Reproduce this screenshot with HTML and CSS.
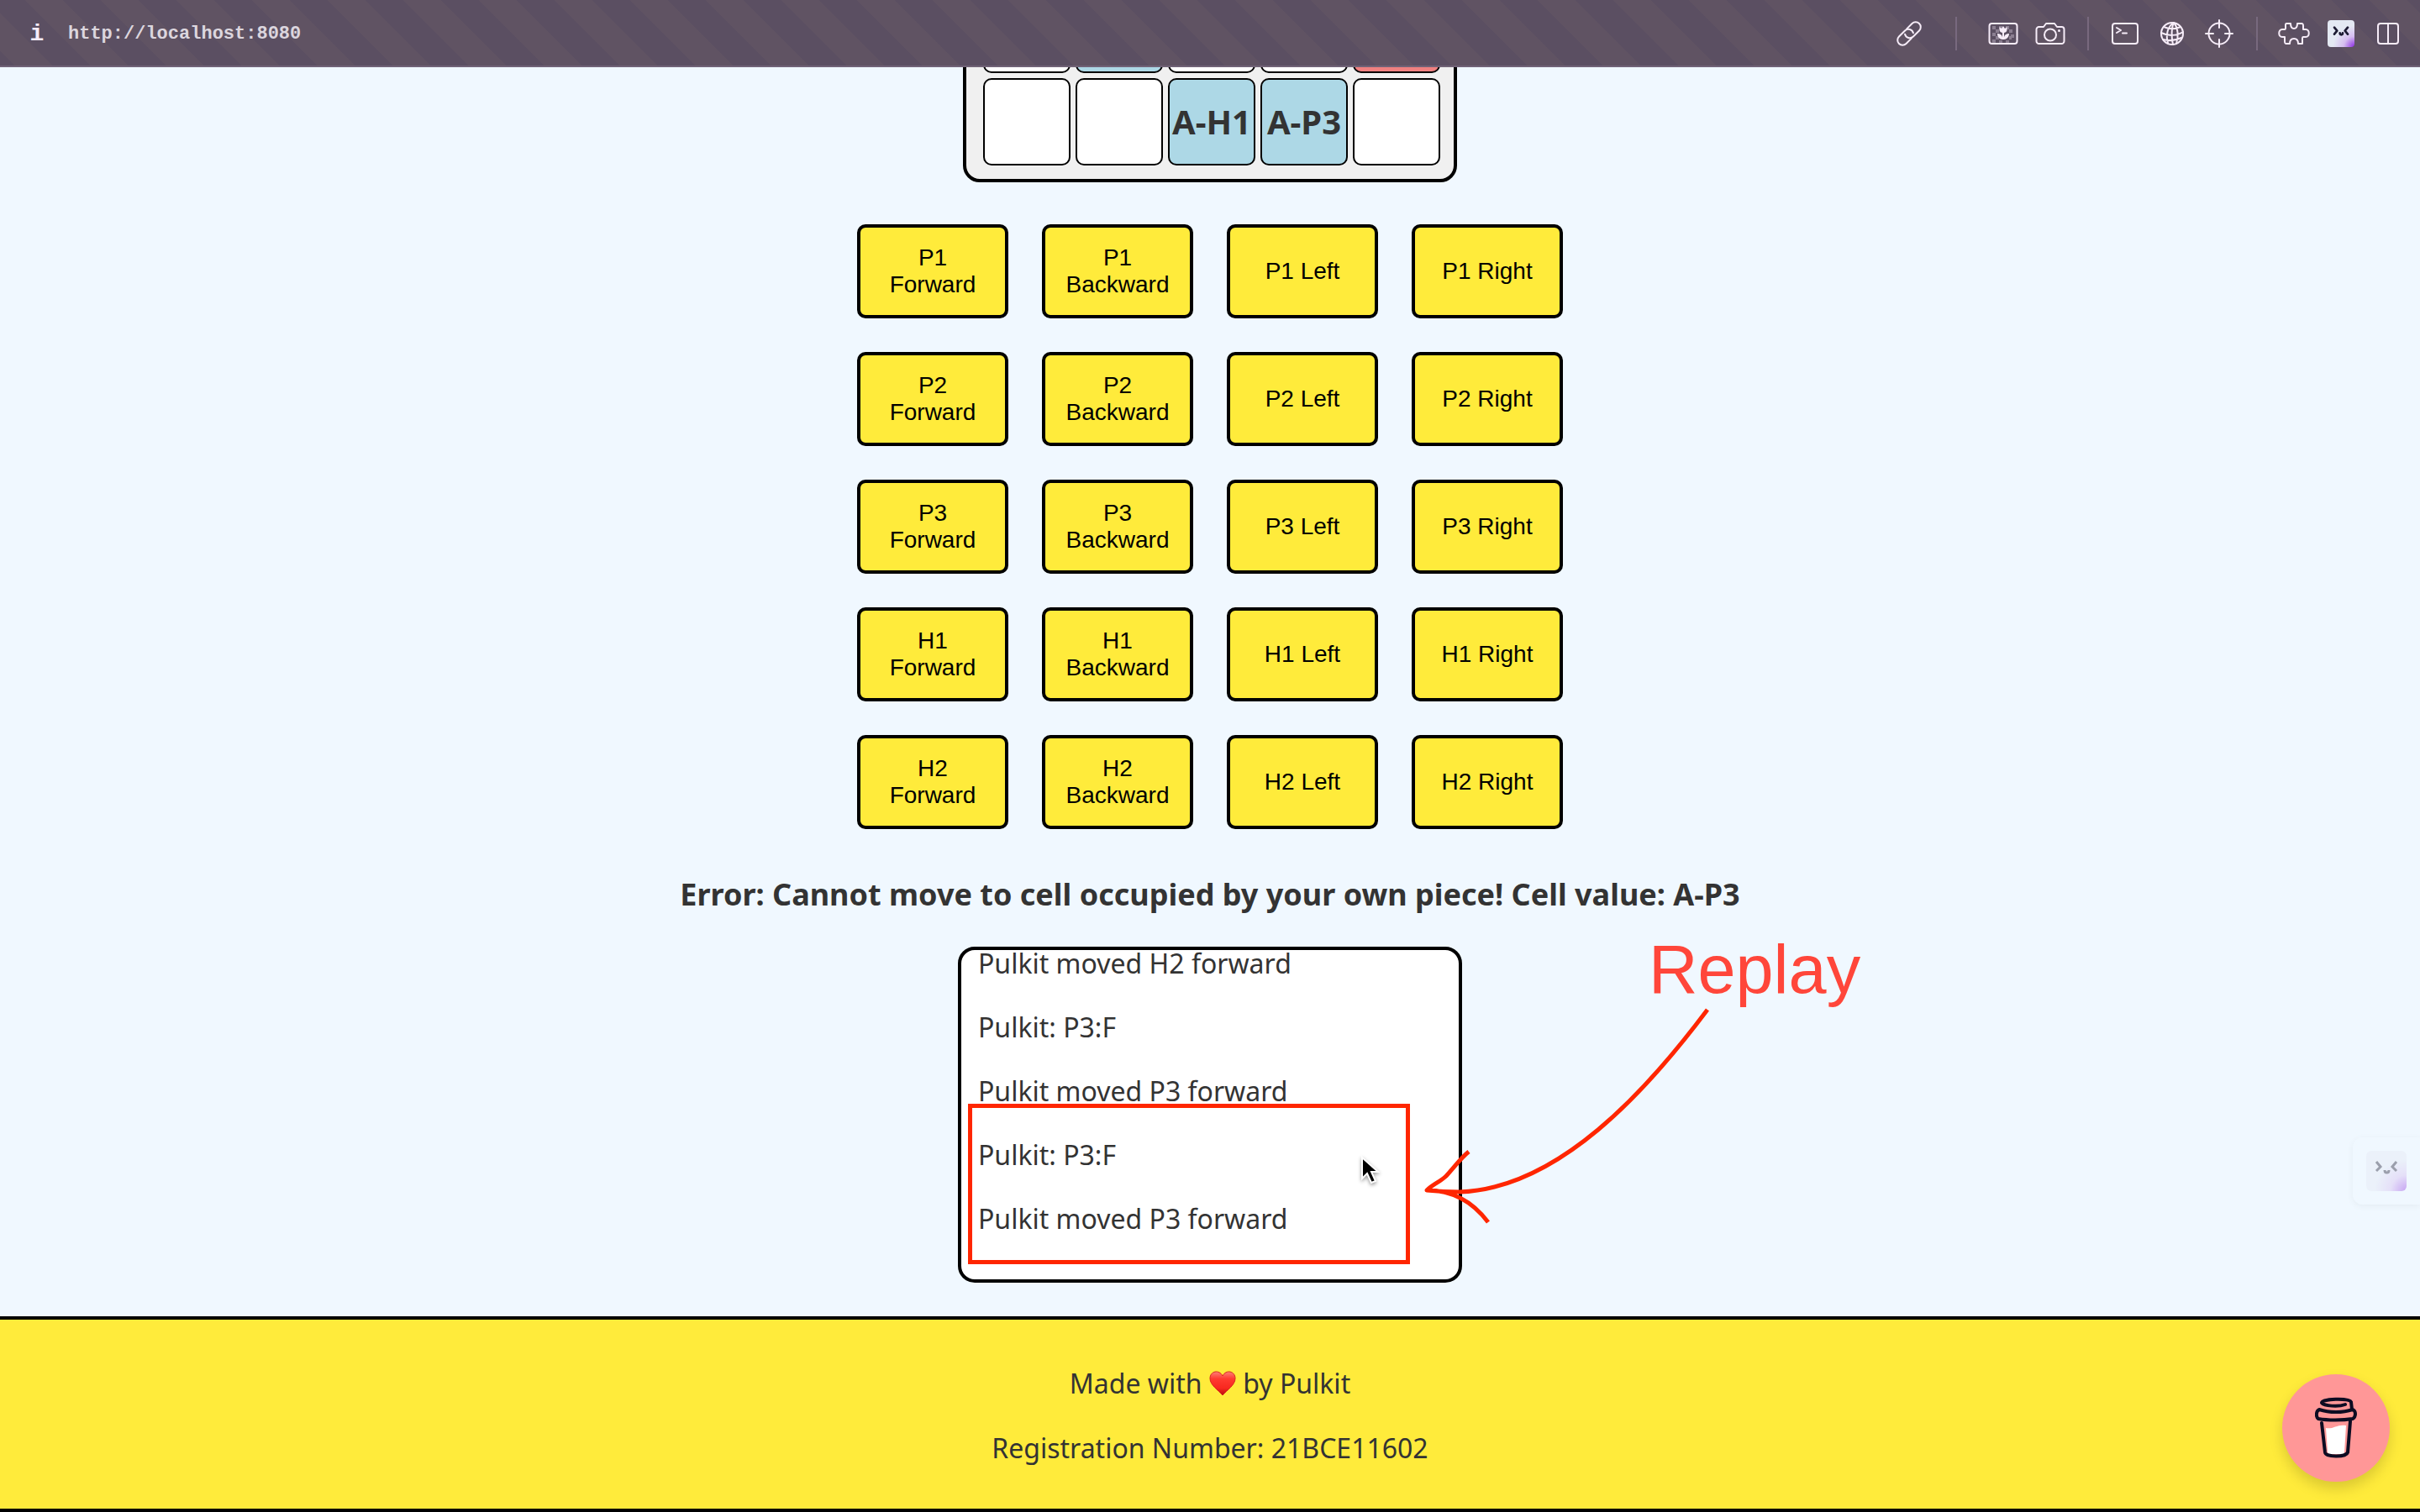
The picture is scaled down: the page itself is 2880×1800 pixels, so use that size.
FILE: index.html
```html
<!DOCTYPE html>
<html lang="en">
<head>
<meta charset="utf-8">
<meta name="viewport" content="width=device-width, initial-scale=1">
<title>Board game</title>
<link rel="stylesheet" href="styles.css">
</head>
<body>
<header class="toolbar">
  <button class="info" aria-label="Site information">i</button>
  <input class="address" type="text" aria-label="Address" value="http://localhost:8080">
  <nav class="tools" aria-label="Browser tools">
    <button class="tool" aria-label="Copy link">
      <svg width="36" height="36" viewBox="0 0 36 36"><g transform="translate(18 18) rotate(-45)"><path d="M-2 6H-11a6 6 0 0 1 0-12H-1a6 6 0 0 1 5 9"/><path d="M2-6H11a6 6 0 0 1 0 12H1a6 6 0 0 1-5-9"/></g></svg>
    </button>
    <span class="divider divider-wide"></span>
    <button class="tool" aria-label="Image">
      <svg width="38" height="32" viewBox="0 0 38 32"><g class="checks"><path d="M6 7h4v4H6zM14 7h4v4h-4zM22 7h4v4h-4zM10 11h4v4h-4zM26 11h4v4h-4zM6 15h4v4H6zM28 17h4v4h-4zM10 19h4v4h-4zM26 19h3v4h-3zM6 23h4v4H6zM14 24h4v3h-4zM22 24h4v3h-4z"/></g><rect x="2.500" y="4" width="33" height="24" rx="3"/><path class="solid" d="M14.500 8l2.500 2 2-3 2 3 2.500-2v3a4 4 0 0 1-3.500 4v5c1-3 3-4 6-4 0 4-3 7-6 7h-2c-3 0-6-3-6-7 3 0 5 1 6 4v-5a4 4 0 0 1-3.500-4z"/></svg>
    </button>
    <button class="tool" aria-label="Screenshot">
      <svg width="38" height="32" viewBox="0 0 38 32"><path d="M5.500 8H11l3-4h10l3 4h5.500a3 3 0 0 1 3 3v14a3 3 0 0 1-3 3h-27a3 3 0 0 1-3-3V11a3 3 0 0 1 3-3z"/><circle cx="19" cy="17.500" r="7"/><circle class="solid" cx="29.500" cy="12.500" r="1.500"/></svg>
    </button>
    <span class="divider"></span>
    <button class="tool" aria-label="Console">
      <svg width="34" height="32" viewBox="0 0 34 32"><rect x="2" y="4" width="30" height="24" rx="3"/><path d="M7 9l5 3-5 3M14 15.500h5"/></svg>
    </button>
    <button class="tool" aria-label="Network">
      <svg width="32" height="32" viewBox="0 0 32 32"><circle cx="16" cy="16" r="13"/><path d="M18 3C11 7 8 17 11 27M18 3c-3 6-3 18-1 26M18 3c5 6 6 16 3 25M6 8c7 3 14 3 20 0M3 15c8 4 18 4 26-1M5 23c8 2 16 1 22-2"/></svg>
    </button>
    <button class="tool" aria-label="Select element">
      <svg width="34" height="34" viewBox="0 0 34 34"><circle cx="17" cy="17" r="12.500"/><path d="M17 1v9M17 24v9M1 17h9M24 17h9"/></svg>
    </button>
    <span class="divider"></span>
    <button class="tool" aria-label="Extensions">
      <svg width="40" height="32" viewBox="0 0 40 32"><path class="heavy" d="M11 4h5c0 4 1 6 4 6s4-2 4-6h5c2 0 2 1 2 3v4h3c5 0 5 9 0 9h-3c-1 0-1 1-1 2v6h-5c0-4-2-6-5-6s-5 2-5 6h-4c-2 0-2-1-2-3v-5H6c-5 0-5-9 0-9h3c1 0 1-1 1-2V6c0-1 0-2 1-2z"/></svg>
    </button>
    <button class="tool" aria-label="Assistant">
      <svg class="face" width="32" height="32" viewBox="0 0 48 48"><defs><radialGradient id="glow" cx="1" cy="1" r="0.800"><stop offset="0" stop-color="#8b2be2"/><stop offset="0.500" stop-color="#d6bdf0"/><stop offset="1" stop-color="#e4e9f3"/></radialGradient></defs><rect width="48" height="48" rx="6" fill="url(#glow)"/><path d="M12 13l5 6-5 6M36 13l-5 6 5 6M22 23c0 4 5 4 5 0"/></svg>
    </button>
    <button class="tool" aria-label="Split view">
      <svg width="28" height="32" viewBox="0 0 28 32"><rect x="2" y="4" width="24" height="24" rx="3"/><path d="M14 4v24"/></svg>
    </button>
  </nav>
</header>

<div class="page">
  <main class="game">
    <section class="board" aria-label="Board">
      <div class="cell"></div><div class="cell team-a"></div><div class="cell"></div><div class="cell"></div><div class="cell team-b"></div>
      <div class="cell"></div><div class="cell"></div><div class="cell team-a">A-H1</div><div class="cell team-a">A-P3</div><div class="cell"></div>
    </section>

    <section class="controls" aria-label="Moves">
      <button class="move">P1 Forward</button><button class="move">P1 Backward</button><button class="move">P1 Left</button><button class="move">P1 Right</button>
      <button class="move">P2 Forward</button><button class="move">P2 Backward</button><button class="move">P2 Left</button><button class="move">P2 Right</button>
      <button class="move">P3 Forward</button><button class="move">P3 Backward</button><button class="move">P3 Left</button><button class="move">P3 Right</button>
      <button class="move">H1 Forward</button><button class="move">H1 Backward</button><button class="move">H1 Left</button><button class="move">H1 Right</button>
      <button class="move">H2 Forward</button><button class="move">H2 Backward</button><button class="move">H2 Left</button><button class="move">H2 Right</button>
    </section>

    <h3 class="status">Error: Cannot move to cell occupied by your own piece! Cell value: A-P3</h3>

    <div class="log-area">
      <section class="log" aria-label="Game log">
        <p>Pulkit moved H2 forward</p>
        <p>Pulkit: P3:F</p>
        <p>Pulkit moved P3 forward</p>
        <p>Pulkit: P3:F</p>
        <p>Pulkit moved P3 forward</p>
      </section>
      <div class="highlight"></div>
      <span class="note">Replay</span>
      <svg class="arrow" width="360" height="280" viewBox="0 0 360 280"><path d="M352 15C280 111 175 228 57 232C42 232 28 231 18 230C26 222 34 220 41 213C52 201 58 192 68 184M18 230C60 230 82 256 91 268"/></svg>
      <svg class="pointer" width="28" height="38" viewBox="0 0 28 38"><path d="M4 3v25l6-6 5 11 5-2-5-11h8z"/></svg>
    </div>
  </main>

  <footer class="footer">
    <p>Made with <svg class="heart" role="img" aria-label="love" width="32" height="30" viewBox="0 0 32 30"><defs><linearGradient id="red" x1="0" y1="0" x2="0" y2="1"><stop offset="0" stop-color="#ff8078"/><stop offset="0.300" stop-color="#ff3b30"/><stop offset="0.700" stop-color="#f8281f"/><stop offset="1" stop-color="#b80d0d"/></linearGradient></defs><path d="M16 29C11 23 1 17 1 9c0-9 11-11 15-3 4-8 15-6 15 3 0 8-10 14-15 20z" fill="url(#red)" stroke="#d8251d"/></svg> by Pulkit</p>
    <p>Registration Number: 21BCE11602</p>
  </footer>
</div>

<button class="side-tab" aria-label="Open assistant">
  <svg class="face" width="48" height="48" viewBox="0 0 48 48"><rect width="48" height="48" rx="6" fill="url(#glow)"/><path d="M12 13l5 6-5 5M36 13l-5 6 5 5M22 23c0 4 5 4 5 0"/></svg>
</button>
<button class="coffee" aria-label="Buy me a coffee">
  <svg width="50" height="74" viewBox="0 0 50 74"><path class="milk" d="M13 37c8 2 14-5 24-3l-2 32c0 2-1 2-3 2H18c-2 0-3-1-3-3z"/><path d="M36 9c-8 3-25 2-28-2 0-5 33-6 35-1l1 9M5 15c12 4 28 4 40 0 4 2 4 8 0 11-12 2-30 2-41 0-3-2-3-9 1-11zM8 31l4 35c1 6 25 6 27 0l3-37"/></svg>
</button>
</body>
</html>
```

FILE: styles.css
```css
* {
  box-sizing: border-box;
}

body {
  margin: 0;
  height: 100vh;
  display: flex;
  flex-direction: column;
  overflow: hidden;
  background: #f0f8ff;
  color: #333;
  font-family: "Comic Sans MS", "Noto Sans", sans-serif;
  font-size: 32px;
  line-height: 44px;
}

button {
  font-family: "Liberation Sans", Arial, sans-serif;
  cursor: pointer;
}

p {
  margin: 0;
}

/* Browser toolbar */
.toolbar {
  flex: none;
  display: flex;
  align-items: center;
  height: 80px;
  padding: 0 10px 0 28px;
  border-bottom: 2px solid #706276;
  background: linear-gradient(45deg, #605363 25%, #5b4f62 25% 50%, #605363 50% 75%, #5b4f62 75%) 30px 0 / 90px 90px;
}

.info,
.tool {
  padding: 0;
  border: 0;
  background: none;
  color: #f6ecf8;
}

.info {
  width: 32px;
  padding-top: 4px;
  font: bold 28px/40px "Liberation Mono", monospace;
}

.address {
  flex: 1;
  min-width: 0;
  margin-left: 21px;
  padding: 4px 0 0;
  border: 0;
  background: none;
  color: #dcd6de;
  font: bold 22px/40px "Liberation Mono", monospace;
}

.tools {
  display: flex;
  align-items: center;
  padding-top: 2px;
}

.tool {
  display: flex;
  justify-content: center;
  width: 56px;
}

.tool svg {
  fill: none;
  stroke: #f6ecf8;
  stroke-width: 2;
  stroke-linecap: round;
  stroke-linejoin: round;
}

.tool .solid {
  fill: #f6ecf8;
  stroke: none;
}

.tool .checks {
  fill: #8b7f91;
  stroke: none;
}

.tool .heavy {
  stroke-width: 2;
}

.tool .face,
.side-tab .face {
  fill: none;
  stroke: #1d1b33;
  stroke-width: 4;
}

.face rect {
  stroke: none;
}

.divider {
  width: 2px;
  height: 40px;
  margin: 0 15px 0 16px;
  background: #78697e;
}

.divider-wide {
  margin: 0 27px;
}

/* Page, kept at its lower end */
.page {
  flex: 1;
  min-height: 0;
  display: flex;
  flex-direction: column;
  justify-content: flex-end;
  overflow: hidden;
}

.game {
  display: flex;
  flex-direction: column;
  align-items: center;
  margin-bottom: 40px;
}

.board {
  display: grid;
  grid-template-columns: repeat(5, 104px);
  gap: 6px;
  padding: 20px 16px 16px 20px;
  border: 4px solid #000;
  border-radius: 20px;
  background: #f0f0f0;
}

.cell {
  display: flex;
  align-items: center;
  justify-content: center;
  height: 104px;
  border: 2px solid #000;
  border-radius: 10px;
  background: #fff;
  font-size: 40px;
  font-weight: bold;
}

.team-a {
  background: #add8e6;
}

.team-b {
  background: #f08080;
}

.controls {
  display: grid;
  grid-template-columns: repeat(4, 180px);
  gap: 40px;
  margin-top: 50px;
}

.move {
  height: 112px;
  padding: 0 20px;
  border: 4px solid #000;
  border-radius: 10px;
  background: #ffeb3b;
  color: #000;
  font-size: 28px;
  line-height: 32px;
}

.status {
  margin: 52px 0 36px;
  font-size: 36px;
  line-height: 52px;
}

.log-area {
  position: relative;
}

.log {
  display: flex;
  flex-direction: column;
  justify-content: flex-end;
  gap: 44px;
  width: 600px;
  height: 400px;
  padding: 0 20px 56px;
  border: 4px solid #000;
  border-radius: 20px;
  background: #fff;
  line-height: 32px;
  overflow: hidden;
}

/* Marks drawn over the log */
.highlight {
  position: absolute;
  left: 12px;
  top: 187px;
  width: 526px;
  height: 191px;
  border: 5px solid #ff2600;
}

.note {
  position: absolute;
  left: 822px;
  top: -18px;
  color: #ff463a;
  font: 81px/90px "Liberation Sans", Arial, sans-serif;
}

.arrow {
  position: absolute;
  left: 540px;
  top: 60px;
  fill: none;
  stroke: #ff2600;
  stroke-width: 5;
  stroke-linejoin: round;
}

.pointer {
  position: absolute;
  left: 477px;
  top: 248px;
  fill: #000;
  stroke: #fff;
  stroke-width: 2;
  filter: drop-shadow(0 2px 2px rgba(0, 0, 0, 0.4));
}

.footer {
  display: flex;
  flex-direction: column;
  gap: 33px;
  padding: 54px 20px 50px;
  border-top: 4px solid #000;
  border-bottom: 4px solid #000;
  background: #ffeb3b;
  text-align: center;
}

.heart {
  vertical-align: -3px;
}

/* Floating buttons */
.side-tab {
  position: fixed;
  right: 0;
  bottom: 366px;
  display: flex;
  align-items: center;
  width: 80px;
  height: 80px;
  padding: 0 16px;
  border: 0;
  border-radius: 12px 0 0 12px;
  background: #f0f8ff;
  box-shadow: 0 2px 8px rgba(0, 0, 0, 0.05);
}

.side-tab .face {
  opacity: 0.4;
  stroke-width: 3;
}

.coffee {
  position: fixed;
  right: 36px;
  bottom: 36px;
  display: flex;
  align-items: center;
  justify-content: center;
  width: 128px;
  height: 128px;
  padding: 0;
  border: 0;
  border-radius: 50%;
  background: #ff9797;
  box-shadow: 0 8px 16px rgba(0, 0, 0, 0.15);
}

.coffee svg {
  fill: none;
  stroke: #0d0c22;
  stroke-width: 4;
  stroke-linecap: round;
  stroke-linejoin: round;
}

.coffee .milk {
  fill: #fff;
  stroke: none;
}
```
